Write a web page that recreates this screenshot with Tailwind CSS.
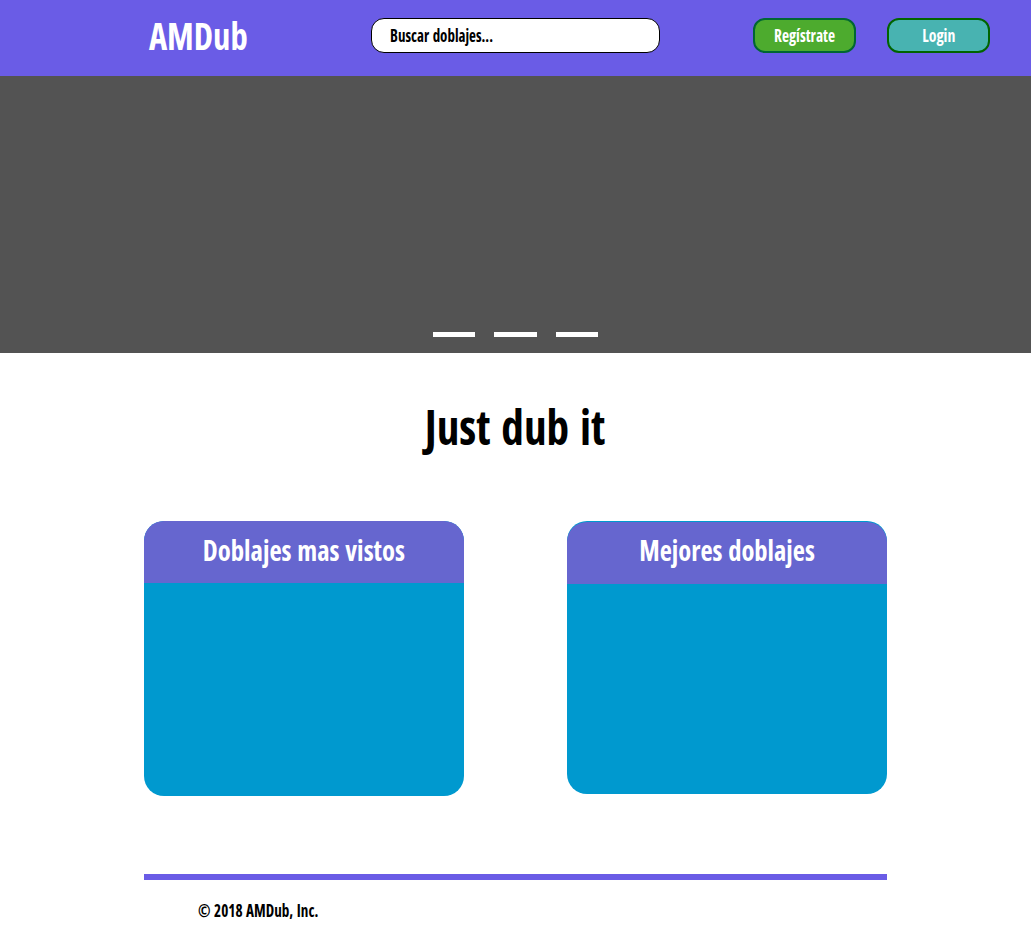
<!DOCTYPE html>
<html lang="es">
<head>
<meta charset="utf-8">
<title>AMDub</title>
<script src="https://cdn.jsdelivr.net/npm/@tailwindcss/browser@4"></script>
</head>
<body class="h-[950px] w-[1031px] overflow-hidden bg-white font-['Open_Sans',sans-serif] font-bold font-stretch-condensed text-black">
<header class="flex h-[76px] items-start bg-[#6a5ce6] pt-[18px] whitespace-nowrap text-white">
  <h1 class="ml-[149px] flex h-[35px] w-[98px] items-center justify-center pb-px text-[38px]"><span class="scale-x-[0.91]">AMDub</span></h1>
  <div class="ml-[124px] flex h-[35px] w-[289px] items-center rounded-[13px] border border-black bg-white pt-px pl-[18px] text-[17px] text-black"><span class="origin-left scale-x-[0.88] [word-spacing:1px]">Buscar doblajes...</span></div>
  <button class="ml-[93px] flex h-[35px] w-[103px] items-center justify-center rounded-[12px] border-2 border-[#006633] bg-[#4dab2e] pt-px text-[17px]"><span class="scale-x-[0.91]">Regístrate</span></button>
  <button class="ml-[31px] flex h-[35px] w-[103px] items-center justify-center rounded-[12px] border-2 border-[#006400] bg-[#48b3b1] pt-px text-[17px]"><span class="scale-x-[0.93]">Login</span></button>
</header>
<section class="flex h-[277px] items-end justify-center bg-[#535353] pb-4">
  <div class="flex">
    <i class="h-[5px] w-[42px] bg-white"></i>
    <i class="ml-[19px] h-[5px] w-[43px] bg-white"></i>
    <i class="ml-[19px] h-[5px] w-[42px] bg-white"></i>
  </div>
</section>
<h2 class="flex h-[168px] items-start justify-center pt-[49px] text-[48px] leading-[50px]"><span class="scale-x-[0.94] [word-spacing:3px]">Just dub it</span></h2>
<main class="mx-[144px] flex h-[353px] items-start justify-between">
  <article class="h-[275px] w-[320px] overflow-hidden rounded-[20px] bg-[#0099cf]">
    <h3 class="flex h-[62px] items-center justify-center bg-[#6666cf] pb-[5px] text-[29px] text-white"><span class="scale-x-[0.92] [word-spacing:1px]">Doblajes mas vistos</span></h3>
  </article>
  <article class="h-[273px] w-[320px] rounded-[20px] bg-[#0099cf] pt-px">
    <h3 class="flex h-[62px] items-center justify-center rounded-t-[20px] bg-[#6666cf] pb-[6px] text-[29px] text-white"><span class="scale-x-[0.915] [word-spacing:1px]">Mejores doblajes</span></h3>
  </article>
</main>
<footer class="mx-[144px] border-t-6 border-[#6a5ce6] pt-[19px] pl-[54px] text-[17px] leading-[24px]"><span class="inline-block origin-left scale-x-[0.89] [word-spacing:1px]">© 2018 AMDub, Inc.</span></footer>
</body>
</html>
